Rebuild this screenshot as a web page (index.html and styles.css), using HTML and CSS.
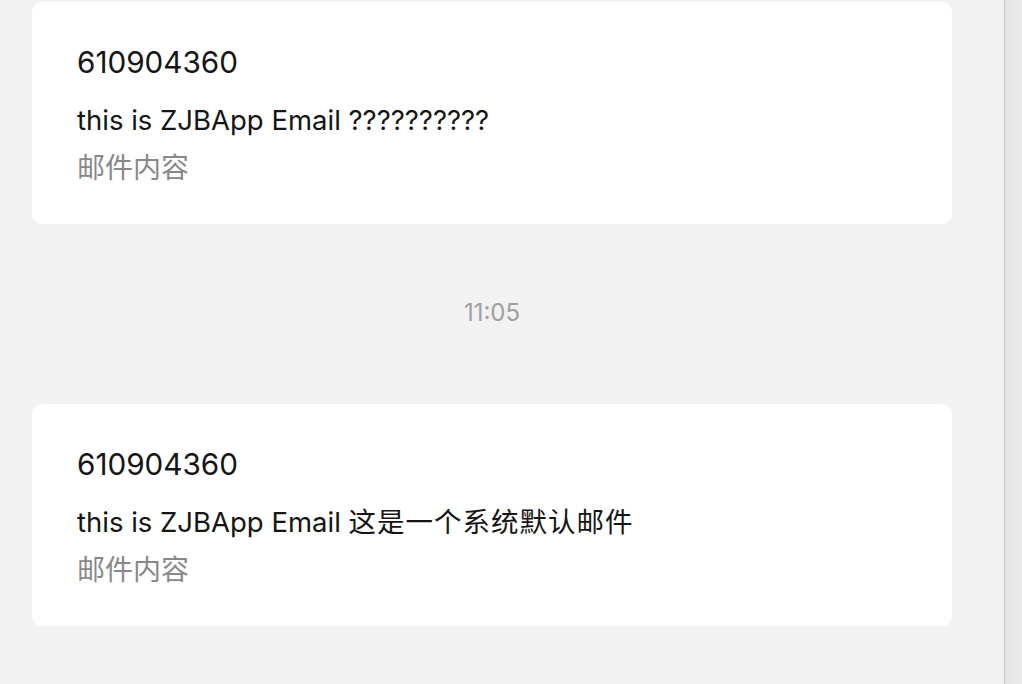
FILE: index.html
```html
<!DOCTYPE html>
<html lang="zh-CN">
<head>
<meta charset="UTF-8" />
<meta name="viewport" content="width=device-width, initial-scale=1" />
<title>邮件</title>
<link rel="stylesheet" href="styles.css">
</head>
<body>
<div class="page">
  <div class="mail-list">
    <div class="mail-card">
      <div class="mail-from">610904360</div>
      <div class="mail-subject">this is ZJBApp Email ??????????</div>
      <div class="mail-body">邮件内容</div>
    </div>
    <div class="mail-time">11:05</div>
    <div class="mail-card">
      <div class="mail-from">610904360</div>
      <div class="mail-subject">this is ZJBApp Email <span class="zh">这是一个系统默认邮件</span></div>
      <div class="mail-body">邮件内容</div>
    </div>
  </div>
  <div class="scroll-track"></div>
</div>
</body>
</html>
```

FILE: styles.css
```css
* {
  box-sizing: border-box;
}
html, body {
  margin: 0;
  height: 100%;
  overflow: hidden;
}
body {
  background: #f2f2f2;
  font-family: Inter, "Noto Sans CJK SC", sans-serif;
  color: #151515;
}
.page {
  display: flex;
  height: 100%;
}
.mail-list {
  flex: 1;
  display: flex;
  flex-direction: column;
  width: 920px;
  padding: 2px 52px 0 32px;
}
.mail-card {
  background: #fff;
  border-radius: 10px;
  padding: 40px 45px 36px;
}
.mail-from {
  font-size: 29.7px;
  line-height: 40px;
  margin-bottom: 18px;
}
.mail-subject {
  font-size: 27.5px;
  line-height: 40px;
  margin-bottom: 8px;
}
.mail-subject .zh {
  letter-spacing: 1px;
}
.mail-body {
  font-size: 28px;
  line-height: 40px;
  color: #888;
}
.mail-time {
  text-align: center;
  font-size: 24px;
  line-height: 30px;
  color: #a0a0a0;
  padding: 74px 0 76px;
}
.scroll-track {
  width: 18px;
  flex-shrink: 0;
  border-left: 1px solid #c6c6c6;
  background: linear-gradient(90deg, #e4e4e4, #ececec);
}
```
